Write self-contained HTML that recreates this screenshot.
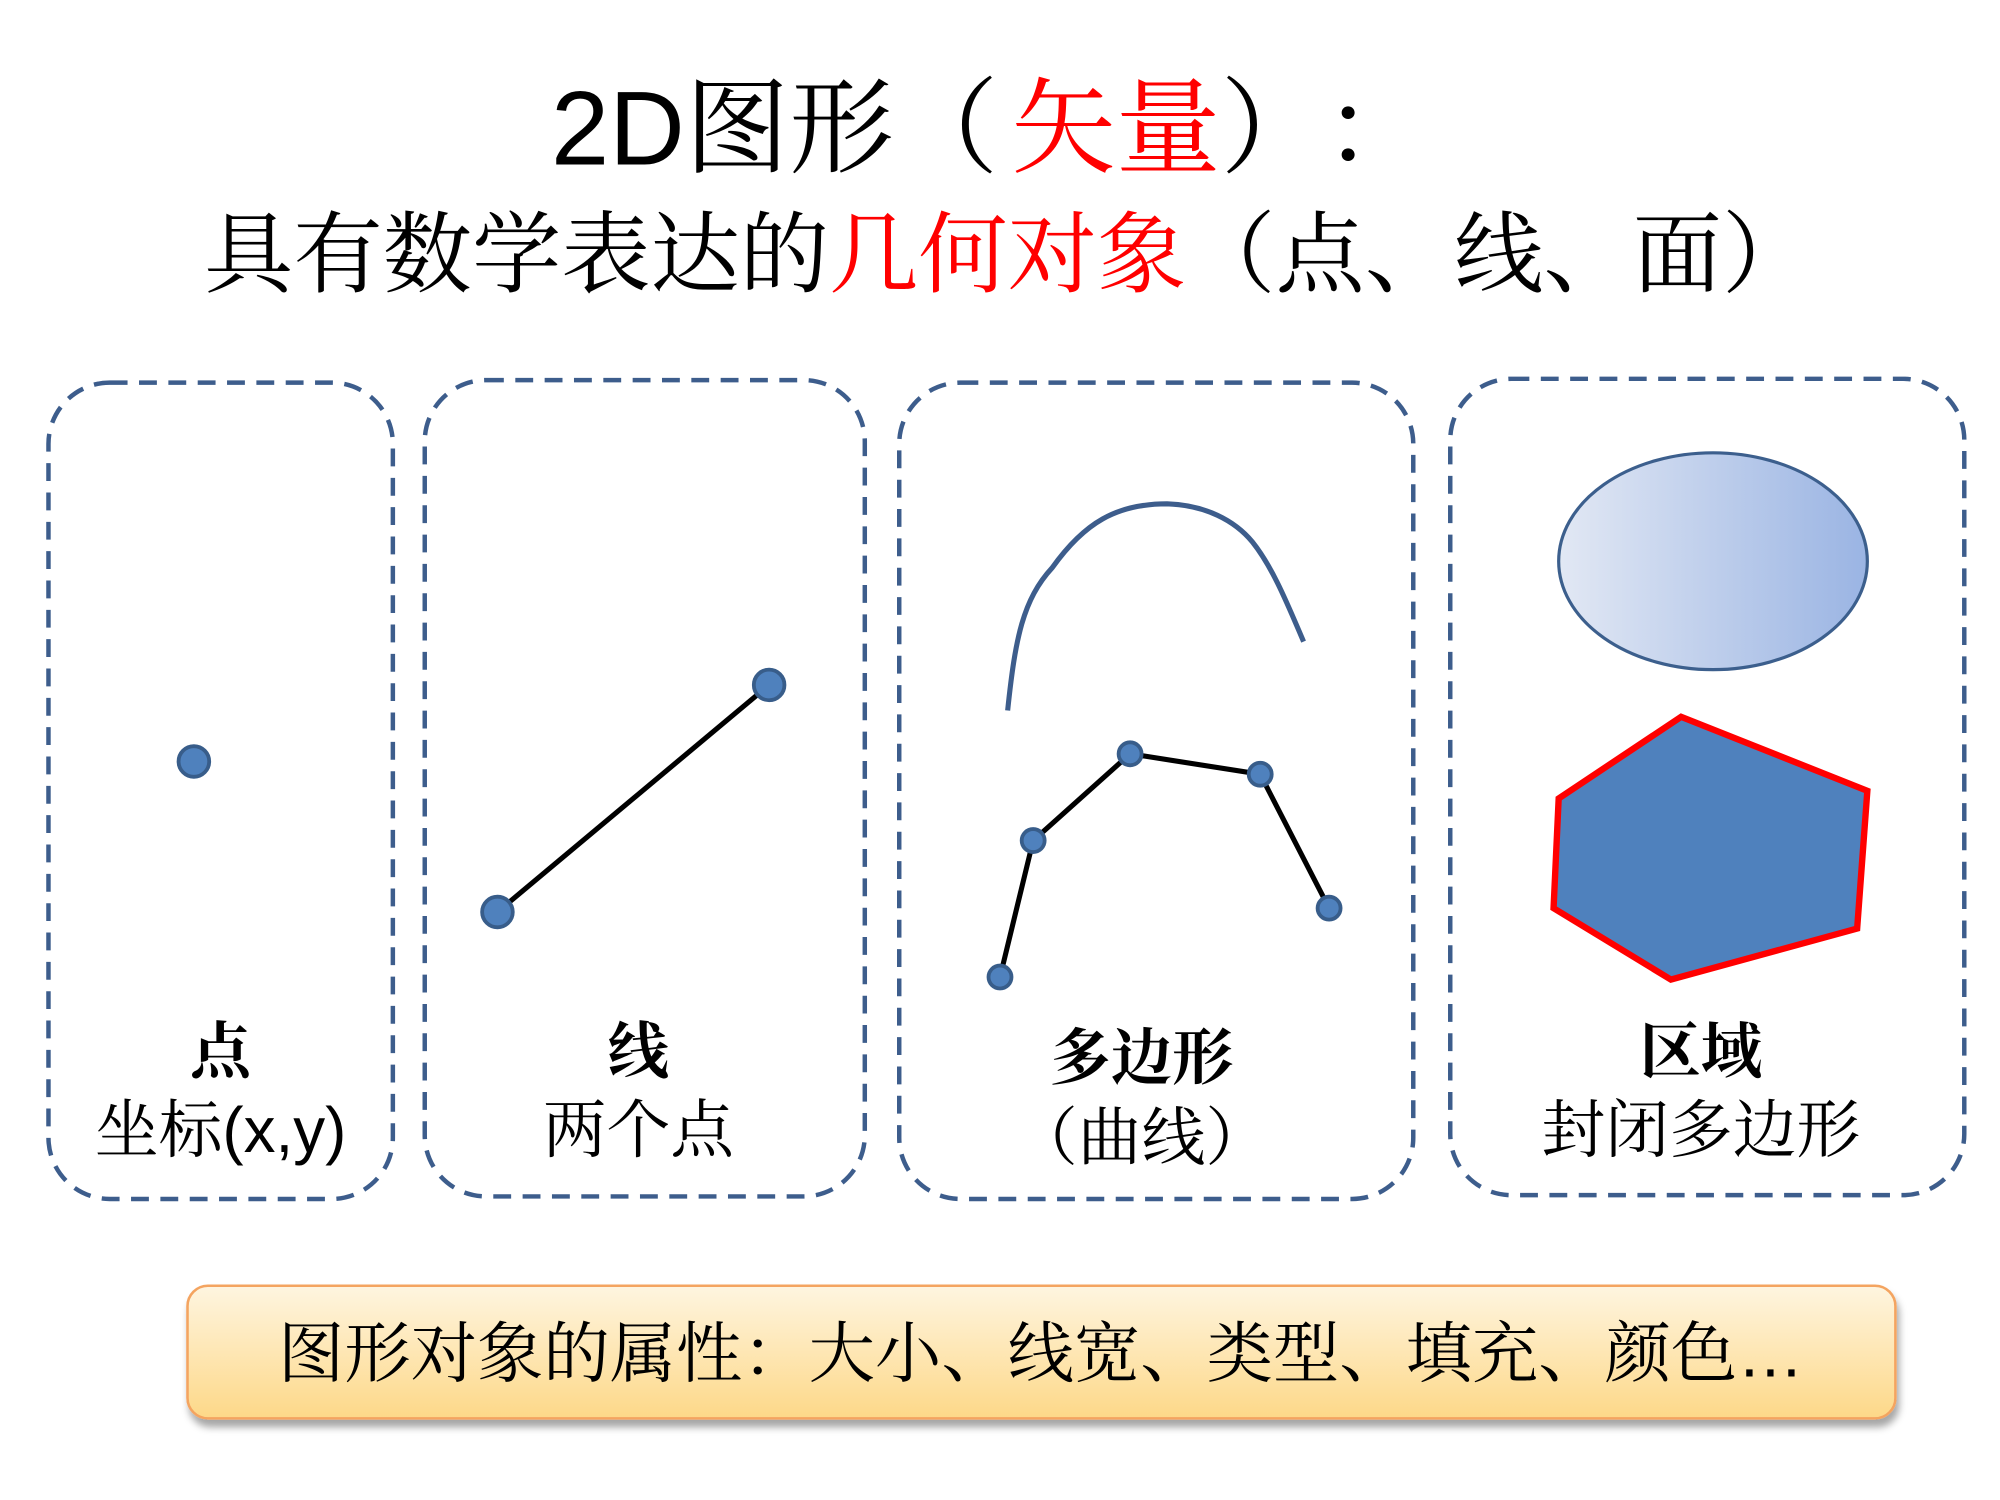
<!DOCTYPE html>
<html><head><meta charset="utf-8"><style>
html,body{margin:0;padding:0;background:#fff;width:2000px;height:1500px;overflow:hidden}
#s{position:absolute;left:0;top:0;width:1568px;height:1176px;transform:scale(1.27551);transform-origin:0 0}
.t{position:absolute;white-space:nowrap;font-family:"Liberation Sans","Noto Serif CJK SC",serif;color:#000}
.c{text-align:center}
.r{color:#f00}
</style></head><body><div id="s">
<svg width="1568" height="1176" style="position:absolute;left:0;top:0">
<defs>
<linearGradient id="eg" x1="0" x2="1" y1="0" y2="0"><stop offset="0" stop-color="#e2e8f4"/><stop offset="1" stop-color="#9ab4e3"/></linearGradient>
<linearGradient id="bg" x1="0" x2="0" y1="0" y2="1"><stop offset="0" stop-color="#fef5e0"/><stop offset="1" stop-color="#fdd888"/></linearGradient>
<filter id="sh" x="-5%" y="-20%" width="110%" height="150%"><feDropShadow dx="2" dy="6" stdDeviation="3" flood-color="#000" flood-opacity="0.35"/></filter>
</defs>
<g fill="none" stroke="#3d5d8c" stroke-width="3.5" stroke-dasharray="14,9">
<rect x="38" y="300" width="270" height="640" rx="48"/>
<rect x="333" y="298" width="345" height="640" rx="48"/>
<rect x="705" y="300" width="403" height="640" rx="48"/>
<rect x="1137" y="297" width="403" height="640" rx="48"/>
</g>
<g fill="#4f81bd" stroke="#385d8a" stroke-width="3">
<circle cx="152" cy="597" r="12"/>
</g>
<line x1="390" y1="715" x2="603" y2="537" stroke="#000" stroke-width="4"/>
<g fill="#4f81bd" stroke="#385d8a" stroke-width="3">
<circle cx="390" cy="715" r="12"/><circle cx="603" cy="537" r="12"/>
</g>
<path d="M790,557 C796,500 802,470 825,445 C850,410 875,395 915,395 C945,396 968,408 982,425 C998,445 1010,475 1022,503" fill="none" stroke="#3d5d8c" stroke-width="4"/>
<polyline points="784,766 810,659 886,591 988,607 1042,712" fill="none" stroke="#000" stroke-width="4"/>
<g fill="#4f81bd" stroke="#385d8a" stroke-width="3">
<circle cx="784" cy="766" r="9"/><circle cx="810" cy="659" r="9"/><circle cx="886" cy="591" r="9"/><circle cx="988" cy="607" r="9"/><circle cx="1042" cy="712" r="9"/>
</g>
<ellipse cx="1343" cy="440" rx="121" ry="85" fill="url(#eg)" stroke="#3c5f8d" stroke-width="2.5"/>
<polygon points="1318,562 1464,620 1456,728 1310,768 1218,712 1222,626" fill="#4f81bd" stroke="#f00" stroke-width="5"/>
<rect x="147" y="1008" width="1339" height="104" rx="16" fill="url(#bg)" stroke="#f4a460" stroke-width="2" filter="url(#sh)"/>
</svg>
<div class="t" style="left:432px;top:52px;font-size:82px;line-height:100px">2D图形<span style="letter-spacing:10px">（</span><span class="r">矢量</span><span style="letter-spacing:40px">）</span>：</div>
<div class="t" style="left:160px;top:155px;font-size:70px;line-height:90px">具有数学表达的<span class="r">几何对象</span>（点、线、面）</div>
<div class="t c" style="left:38px;width:270px;top:796px;font-size:48px;line-height:60px;font-weight:bold">点</div>
<div class="t c" style="left:38px;width:270px;top:856px;font-size:50px;line-height:60px">坐标(x,y)</div>
<div class="t c" style="left:333px;width:335px;top:796px;font-size:48px;line-height:60px;font-weight:bold">线</div>
<div class="t c" style="left:333px;width:335px;top:856px;font-size:50px;line-height:60px">两个点</div>
<div class="t c" style="left:705px;width:380px;top:801px;font-size:48px;line-height:60px;font-weight:bold">多边形</div>
<div class="t c" style="left:705px;width:380px;top:862px;font-size:50px;line-height:60px">（曲线）</div>
<div class="t c" style="left:1137px;width:393px;top:796px;font-size:48px;line-height:60px;font-weight:bold">区域</div>
<div class="t c" style="left:1137px;width:393px;top:856px;font-size:50px;line-height:60px">封闭多边形</div>
<div class="t" style="left:218px;top:1030px;font-size:52px;line-height:64px">图形对象的属性：大小、线宽、类型、填充、颜色…</div>
</div></body></html>
